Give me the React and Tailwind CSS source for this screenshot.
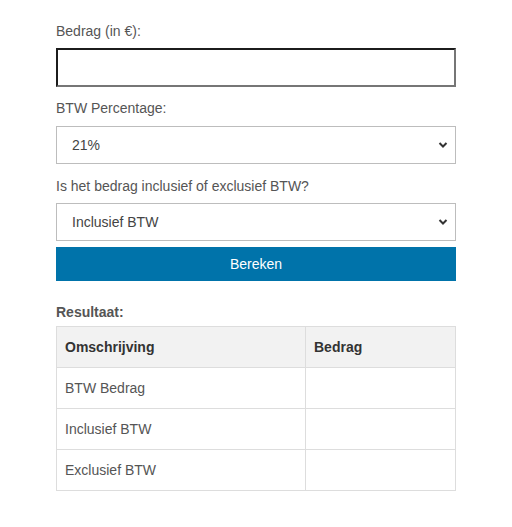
import React from 'react';

function Chevron() {
  return (
    <svg className="pointer-events-none absolute right-[7px] top-1/2 -translate-y-1/2" width="10" height="7" viewBox="0 0 10 7">
      <path d="M1.5 1.5 L5 5 L8.5 1.5" fill="none" stroke="#333" strokeWidth="2" />
    </svg>
  );
}

function Select({ value }) {
  return (
    <div className="relative h-[38px] border border-[#bdbdbd] bg-white">
      <div className="flex h-full items-center pl-[15px] text-[14px] text-[#444]">{value}</div>
      <Chevron />
    </div>
  );
}

export default function App() {
  const rows = ['BTW Bedrag', 'Inclusief BTW', 'Exclusief BTW'];
  return (
    <div className="min-h-[527px] bg-white px-[56px] pt-[22px] font-['Liberation_Sans',Arial,sans-serif] text-[14px] text-[#555]">
      <div className="mb-[8px] leading-[18px]">Bedrag (in €):</div>
      <div className="h-[39px] border-2 border-t-[#1c1c1c] border-l-[#1c1c1c] border-b-[#767676] border-r-[#767676] bg-white" />

      <div className="mb-[9px] mt-[12px] leading-[18px]">BTW Percentage:</div>
      <Select value="21%" />

      <div className="mb-[8px] mt-[13px] leading-[18px]">Is het bedrag inclusief of exclusief BTW?</div>
      <Select value="Inclusief BTW" />

      <button className="mt-[6px] flex h-[34px] w-full items-center justify-center bg-[#0073aa] text-[14px] text-white">
        Bereken
      </button>

      <div className="mb-[5px] mt-[22px] font-bold leading-[18px]">Resultaat:</div>
      <table className="w-full border-collapse border border-[#dddddd] text-left">
        <thead>
          <tr className="bg-[#f2f2f2]">
            <th className="h-[41px] w-[249px] border border-[#dddddd] px-[8px] font-bold text-[#333]">Omschrijving</th>
            <th className="h-[41px] border border-[#dddddd] px-[8px] font-bold text-[#333]">Bedrag</th>
          </tr>
        </thead>
        <tbody>
          {rows.map((r) => (
            <tr key={r}>
              <td className="h-[41px] border border-[#dddddd] px-[8px]">{r}</td>
              <td className="h-[41px] border border-[#dddddd] px-[8px]"></td>
            </tr>
          ))}
        </tbody>
      </table>
    </div>
  );
}
